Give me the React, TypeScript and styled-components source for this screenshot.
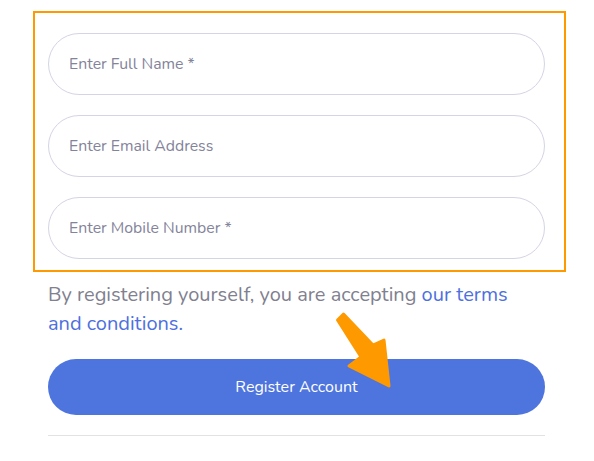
import React from "react";
import styled, { createGlobalStyle } from "styled-components";

const Global = createGlobalStyle`
  html, body { margin: 0; padding: 0; background: #ffffff; }
  body { font-family: "Nunito", Lato, sans-serif; }
`;

const Page = styled.div`
  position: relative;
  width: 594px;
  height: 461px;
  padding: 0 49px 0 48px;
  box-sizing: border-box;
  overflow: hidden;
`;

const FieldGroup = styled.div`
  margin: 11px -21px 0 -15px;
  padding: 20px 19px 11px 13px;
  border: 2px solid #ff9900;
  display: flex;
  flex-direction: column;
  gap: 20px;
`;

const Input = styled.input`
  display: block;
  width: 100%;
  height: 62px;
  box-sizing: border-box;
  border: 1px solid #d4d4e6;
  border-radius: 31px;
  padding: 0 20px 1px;
  font-family: "Nunito", Lato, sans-serif;
  font-size: 15.8px;
  color: #3a3a4a;
  background: #fff;
  outline: none;
  &::placeholder {
    color: #83839a;
    opacity: 1;
  }
`;

const Terms = styled.p`
  margin: 8px 0 0;
  font-family: "Nunito", Lato, sans-serif;
  font-size: 20px;
  line-height: 29px;
  color: #80808f;
`;

const TermsLink = styled.a`
  color: #4e6fe0;
  text-decoration: none;
`;

const Button = styled.button`
  display: block;
  width: 100%;
  height: 56px;
  margin-top: 21px;
  border: none;
  border-radius: 28px;
  background: #4e74de;
  color: #ffffff;
  font-family: "Nunito", Lato, sans-serif;
  font-size: 16px;
  cursor: pointer;
`;

const Divider = styled.hr`
  margin: 20px 0 0;
  border: none;
  border-top: 1px solid #e2e2e2;
`;

const Arrow = styled.svg`
  position: absolute;
  left: 330px;
  top: 305px;
  width: 70px;
  height: 95px;
  pointer-events: none;
`;

export default function App() {
  return (
    <>
      <Global />
      <Page>
        <FieldGroup>
          <Input placeholder="Enter Full Name *" />
          <Input placeholder="Enter Email Address" />
          <Input placeholder="Enter Mobile Number *" />
        </FieldGroup>
        <Terms>
          By registering yourself, you are accepting <TermsLink href="#">our terms</TermsLink>
          <br />
          <TermsLink href="#">and conditions.</TermsLink>
        </Terms>
        <Button>Register Account</Button>
        <Divider />
        <Arrow viewBox="330 305 70 95">
          <polygon
            points="337.5,320 343.5,314 373,345 384,340 389,386 349,366 361,357"
            fill="#ff9900"
            stroke="#ff9900"
            strokeWidth="3"
            strokeLinejoin="round"
          />
        </Arrow>
      </Page>
    </>
  );
}
